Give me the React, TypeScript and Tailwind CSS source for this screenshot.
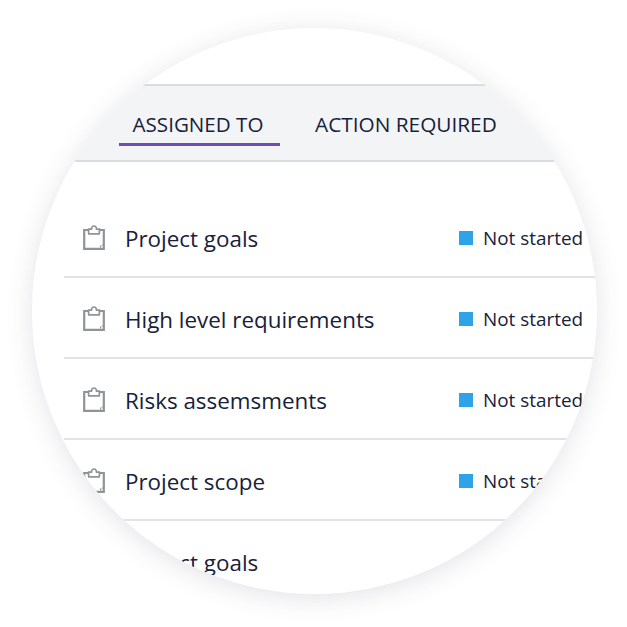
import React from 'react';

const rows = ['Project goals', 'High level requirements', 'Risks assemsments', 'Project scope', 'Project goals'];

// clipboard icon used in front of each task
const ClipboardIcon = () => (
  <svg width="22" height="25" viewBox="0 0 22 25" fill="none" className="shrink-0 mt-[1px]">
    <path d="M5.5 5H1.2V23.8H20.8V5H16.5" stroke="#8f9496" strokeWidth="2.2" />
    <path d="M5.6 8.6V4.2H8.4C8.6 2.2 9.6 1 11 1C12.4 1 13.4 2.2 13.6 4.2H16.4V8.6" stroke="#8f9496" strokeWidth="1.7" />
    <path d="M5 8.9H17" stroke="#8f9496" strokeWidth="1.6" />
    <path d="M17 23.5V20.5H20.5V18L17 23.5Z" fill="#8f9496" />
  </svg>
);

export default function App() {
  return (
    <div className="w-[627px] h-[627px] bg-white pt-[28px] pl-[32px] font-['Open_Sans',sans-serif]">
      <div className="w-[565px] h-[566px] rounded-full overflow-hidden bg-white pt-[56px] shadow-[0_4px_26px_rgba(60,64,90,0.15)]">
        <div className="h-[78px] w-full bg-[#f3f4f6] border-t-2 border-b-2 border-[#d9dce0] flex items-start pl-[87px] pt-[19px] text-[20.6px] text-[#18213a]">
          <div className="w-[161px] h-[44px] border-b-[3px] border-[#6c4fb3] text-center leading-[44px] -mt-[3px] pr-[3px]">ASSIGNED TO</div>
          <div className="ml-[35px] leading-[44px] -mt-[3px] text-[20.8px]">ACTION REQUIRED</div>
        </div>
        <div className="pt-[35px] pl-[32px]">
          {rows.map((label, i) => (
            <div key={i} className="h-[81px] w-[560px] border-b-2 border-[#e2e3e5] flex items-center text-[#18213a]">
              <div className="ml-[19px] w-[42px]"><ClipboardIcon /></div>
              <div className="w-[334px] text-[22.4px] leading-[30px] pt-[5px]">{label}</div>
              <div className="w-[14px] h-[14px] bg-[#2fa3e8] shrink-0 mt-[3px]" />
              <div className="ml-[10px] text-[18.9px] whitespace-nowrap pt-[4px]">Not started</div>
            </div>
          ))}
        </div>
      </div>
    </div>
  );
}
